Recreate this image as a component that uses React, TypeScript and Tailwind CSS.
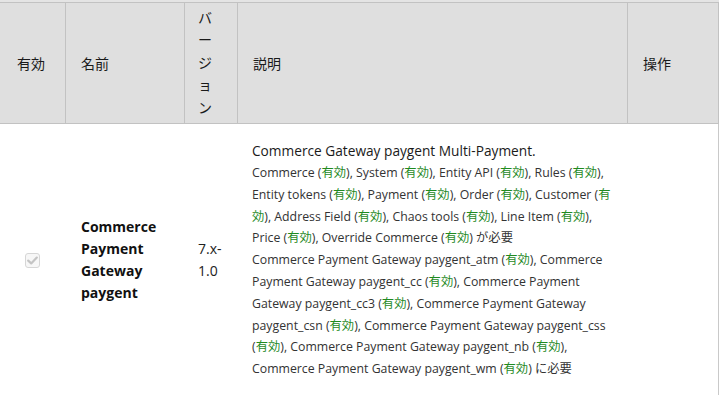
import React from "react";

const font = { fontFamily: '"Open Sans", "Noto Sans CJK JP", sans-serif' };

function E() {
  return <span className="text-[#1f8a1f]">有効</span>;
}

function Check() {
  return (
    <div className="w-[15px] h-[15px] rounded-[3px] border border-[#d6d6d6] bg-[#f7f7f7] flex items-center justify-center">
      <svg width="11" height="9" viewBox="0 0 11 9">
        <path d="M1.2 4.6 L4.2 7.4 L9.8 1.6" fill="none" stroke="#c4c4c4" strokeWidth="2.2" strokeLinecap="round" strokeLinejoin="round" />
      </svg>
    </div>
  );
}

export default function App() {
  const lines: React.ReactNode[] = [
    <>Commerce (<E />), System (<E />), Entity API (<E />), Rules (<E />),</>,
    <>Entity tokens (<E />), Payment (<E />), Order (<E />), Customer (<span className="text-[#1f8a1f]">有</span></>,
    <><span className="text-[#1f8a1f]">効</span>), Address Field (<E />), Chaos tools (<E />), Line Item (<E />),</>,
    <>Price (<E />), Override Commerce (<E />) が必要</>,
    <>Commerce Payment Gateway paygent_atm (<E />), Commerce</>,
    <>Payment Gateway paygent_cc (<E />), Commerce Payment</>,
    <>Gateway paygent_cc3 (<E />), Commerce Payment Gateway</>,
    <>paygent_csn (<E />), Commerce Payment Gateway paygent_css</>,
    <>(<E />), Commerce Payment Gateway paygent_nb (<E />),</>,
    <>Commerce Payment Gateway paygent_wm (<E />) に必要</>,
  ];
  return (
    <div className="w-[719px] h-[395px] overflow-hidden bg-white" style={font}>
      <div className="h-[2px] bg-[#e4e4e4]" />
      <div className="w-[719px] border-t border-b border-r border-[#c2c2c2] bg-[#dfdfdf] flex h-[122px] text-[14px] text-[#1a1a1a]">
        <div className="w-[65px] shrink-0 flex items-center pl-[17px]">有効</div>
        <div className="w-[119px] shrink-0 border-l border-[#c2c2c2] flex items-center pl-[15px]">名前</div>
        <div className="w-[53px] shrink-0 border-l border-[#c2c2c2] flex items-center pl-[13px] pr-[14px] leading-[22.5px]">
          <div className="w-[18px] break-all">バージョン</div>
        </div>
        <div className="w-[390px] shrink-0 border-l border-[#c2c2c2] flex items-center pl-[15px]">説明</div>
        <div className="flex-1 border-l border-[#c2c2c2] flex items-center pl-[15px]">操作</div>
      </div>
      <div className="w-[719px] border-r border-[#c9c9c9] flex h-[272px] text-[#333]">
        <div className="w-[65px] shrink-0 flex items-center justify-center">
          <Check />
        </div>
        <div className="w-[119px] shrink-0 flex items-center pl-[16px] pr-[14px] font-bold text-[14px] leading-[22px] text-[#111]">
          <div>
            Commerce<br />Payment<br />Gateway<br />paygent
          </div>
        </div>
        <div className="w-[53px] shrink-0 flex items-center pl-[14px] text-[14px] leading-[22px] text-[#222]">
          <div>
            7.x-<br />1.0
          </div>
        </div>
        <div className="w-[390px] shrink-0 flex items-center pl-[15px]">
          <div className="whitespace-nowrap">
            <div className="text-[13.7px] leading-[22px] text-[#1a1a1a]">Commerce Gateway paygent Multi-Payment.</div>
            {lines.map((l, i) => (
              <div key={i} className="text-[12.3px] leading-[21.8px]">
                {l}
              </div>
            ))}
          </div>
        </div>
        <div className="flex-1" />
      </div>
    </div>
  );
}
